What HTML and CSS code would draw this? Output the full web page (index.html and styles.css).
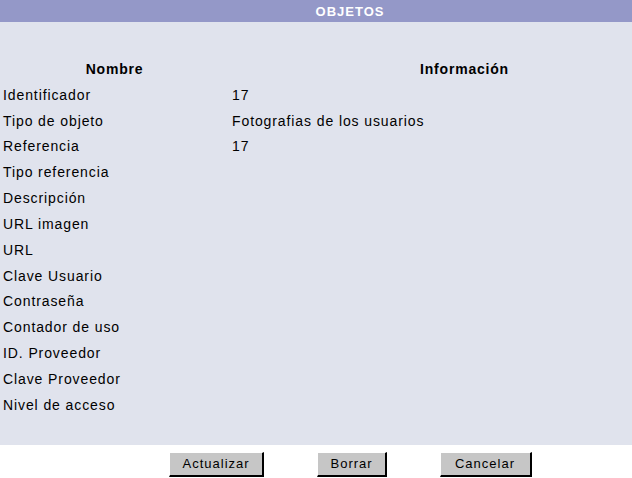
FILE: index.html
```html
<!DOCTYPE html>
<html lang="es">
<head>
<meta charset="utf-8">
<title>Objetos</title>
<link rel="stylesheet" href="styles.css">
</head>
<body>
<div class="page">
  <div class="panel">
    <div class="title">OBJETOS</div>
    <table class="grid">
      <thead>
        <tr><th class="col-name">Nombre</th><th>Información</th></tr>
      </thead>
      <tbody>
        <tr><td>Identificador</td><td>17</td></tr>
        <tr><td>Tipo de objeto</td><td>Fotografias de los usuarios</td></tr>
        <tr><td>Referencia</td><td>17</td></tr>
        <tr><td>Tipo referencia</td><td></td></tr>
        <tr><td>Descripción</td><td></td></tr>
        <tr><td>URL imagen</td><td></td></tr>
        <tr><td>URL</td><td></td></tr>
        <tr><td>Clave Usuario</td><td></td></tr>
        <tr><td>Contraseña</td><td></td></tr>
        <tr><td>Contador de uso</td><td></td></tr>
        <tr><td>ID. Proveedor</td><td></td></tr>
        <tr><td>Clave Proveedor</td><td></td></tr>
        <tr><td>Nivel de acceso</td><td></td></tr>
      </tbody>
    </table>
  </div>
  <div class="actions">
    <button class="btn btn-update" type="button">Actualizar</button>
    <button class="btn btn-delete" type="button">Borrar</button>
    <button class="btn btn-cancel" type="button">Cancelar</button>
  </div>
</div>
</body>
</html>
```

FILE: styles.css
```css
html, body {
  margin: 0;
  padding: 0;
  background: #ffffff;
  overflow: hidden;
}

body {
  font-family: "Liberation Sans", Arial, sans-serif;
  font-size: 14px;
  color: #000000;
}

.page {
  width: 700px;
}

.panel {
  background: #e0e3ed;
  padding-bottom: 26px;
}

.title {
  height: 22px;
  line-height: 23px;
  background: #9498c8;
  color: #ffffff;
  font-weight: bold;
  font-size: 13px;
  letter-spacing: 1px;
  text-align: center;
}

.grid {
  width: 100%;
  border-collapse: collapse;
  margin-top: 35px;
  letter-spacing: 0.9px;
}

.grid th,
.grid td {
  height: 25.83px;
  line-height: 25.83px;
  padding: 0 3px;
  vertical-align: middle;
  white-space: nowrap;
}

.grid th {
  font-weight: bold;
  text-align: center;
  letter-spacing: 0.8px;
}

.grid .col-name {
  width: 223px;
}

.grid td {
  text-align: left;
}

.actions {
  display: flex;
  justify-content: center;
  gap: 53px;
  margin-top: 7px;
}

.btn {
  height: 25px;
  box-sizing: border-box;
  font-family: "Liberation Sans", Arial, sans-serif;
  font-size: 13px;
  letter-spacing: 1px;
  color: #000000;
  background: #c6c6c6;
  border-style: solid;
  border-width: 1px 2px 2px 1px;
  border-color: #ffffff #000000 #000000 #ffffff;
  padding: 0 13px;
  margin: 0;
}

.btn-update { width: 95px; }
.btn-delete { width: 70px; }
.btn-cancel { width: 92px; }
```
